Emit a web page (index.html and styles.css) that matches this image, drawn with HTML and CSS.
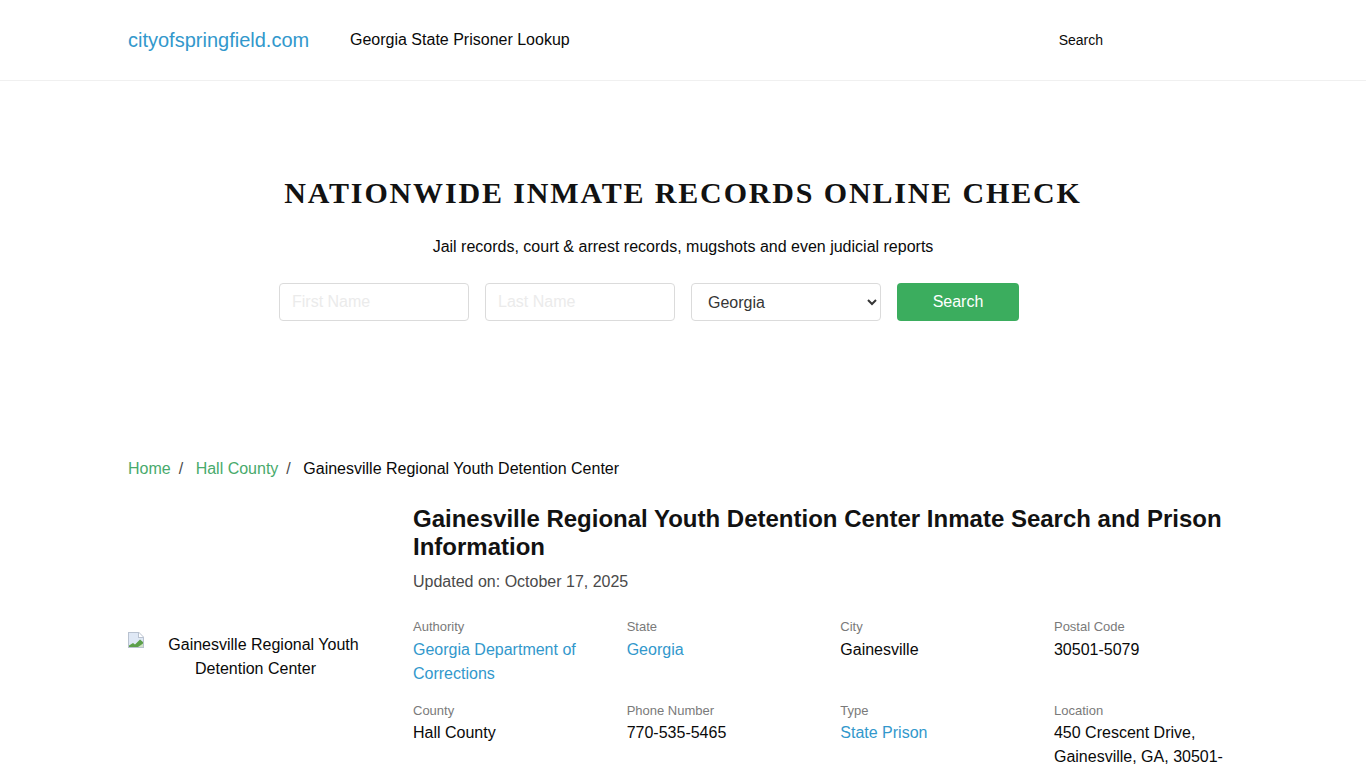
FILE: index.html
```html
<!DOCTYPE html>
<html lang="en">
<head>
<meta charset="utf-8">
<title>Gainesville Regional Youth Detention Center</title>
<link rel="stylesheet" href="styles.css">
</head>
<body>
<header class="topbar">
  <div class="container topbar-inner">
    <a class="brand" href="#">cityofspringfield.com</a>
    <a class="nav-title" href="#">Georgia State Prisoner Lookup</a>
    <a class="nav-search" href="#">Search</a>
  </div>
</header>
<section class="hero">
  <h2 class="hero-title">NATIONWIDE INMATE RECORDS ONLINE CHECK</h2>
  <p class="hero-sub">Jail records, court &amp; arrest records, mugshots and even judicial reports</p>
  <form class="search-form">
    <input class="field" type="text" placeholder="First Name">
    <input class="field" type="text" placeholder="Last Name">
    <select class="field select"><option>Georgia</option></select>
    <button class="btn" type="button">Search</button>
  </form>
</section>
<main class="container">
  <nav class="crumbs">
    <a href="#">Home</a><span class="sep">/</span><a href="#">Hall County</a><span class="sep">/</span><span>Gainesville Regional Youth Detention Center</span>
  </nav>
  <div class="detail">
    <div class="photo">
      <svg class="broken" width="16" height="16" viewBox="0 0 16 16"><path d="M0 0H11L16 5V16H0Z" fill="#b9c2d0"/><path d="M1 1H10V6H15V15H1Z" fill="#dfe8f5"/><path d="M11 1L15 5H11Z" fill="#fff"/><path d="M1 15V13.500L5 11L7 12.500L12 7.500L15 10V15Z" fill="#5da04a"/><path d="M10 15L15 11.500V15Z" fill="#cfe3c4"/></svg>
      <span class="alt">Gainesville Regional Youth Detention Center</span>
    </div>
    <div class="info">
      <h1 class="title">Gainesville Regional Youth Detention Center Inmate Search and Prison Information</h1>
      <p class="updated">Updated on: October 17, 2025</p>
      <div class="grid">
        <div class="cell"><div class="label">Authority</div><a href="#">Georgia Department of Corrections</a></div>
        <div class="cell"><div class="label">State</div><a href="#">Georgia</a></div>
        <div class="cell"><div class="label">City</div><div>Gainesville</div></div>
        <div class="cell"><div class="label">Postal Code</div><div>30501-5079</div></div>
        <div class="cell"><div class="label">County</div><div>Hall County</div></div>
        <div class="cell"><div class="label">Phone Number</div><div>770-535-5465</div></div>
        <div class="cell"><div class="label">Type</div><a href="#">State Prison</a></div>
        <div class="cell"><div class="label">Location</div><div>450 Crescent Drive, Gainesville, GA, 30501-5079</div></div>
      </div>
    </div>
  </div>
</main>
</body>
</html>
```
FILE: styles.css
```css
* { box-sizing: border-box; }
html, body { margin: 0; padding: 0; }
body { font-family: "Liberation Sans", Arial, sans-serif; font-size: 16px; line-height: 24px; color: #0a0a0a; background: #fff; height: 768px; overflow: hidden; }
a { text-decoration: none; }
.container { width: 1110px; margin: 0 auto; }
.topbar { height: 81px; border-bottom: 1px solid #f0f0f0; }
.topbar-inner { display: flex; align-items: center; height: 80px; }
.brand { font-size: 20px; color: #3298cc; width: 222px; }
.nav-title { color: #0a0a0a; }
.nav-search { color: #0a0a0a; font-size: 14px; margin-left: 489px; }
.hero { height: 361px; padding-top: 94px; text-align: center; }
.hero-title { margin: 0; font-family: "Liberation Serif", "Times New Roman", serif; font-size: 30px; line-height: 36px; font-weight: 700; letter-spacing: 1.85px; color: #121212; }
.hero-sub { margin: 24px 0 0; }
.search-form { display: flex; justify-content: center; gap: 16px; margin-top: 24px; padding-right: 68px; }
.field { width: 190px; height: 38px; border: 1px solid #dbdbdb; border-radius: 4px; padding: 0 12px; font: 16px "Liberation Sans", Arial, sans-serif; background: #fff; color: #363636; }
.field::placeholder { color: #ebebeb; }
.btn { width: 122px; height: 38px; border: 0; border-radius: 4px; background: #3bad5e; color: #fff; font: 16px "Liberation Sans", Arial, sans-serif; }
.crumbs { margin-top: 15px; display: flex; color: #0a0a0a; }
.crumbs a { color: #48aa6c; }
.sep { margin: 0 12.5px 0 8px; color: #4a4a4a; }
.detail { display: flex; margin-top: 24px; }
.photo { width: 285px; flex: none; align-self: flex-start; margin-top: 128px; padding-right: 30px; text-align: center; }
.broken { float: left; margin-top: -1px; }
.info { flex: 1; min-width: 0; }
.title { margin: 0; font-size: 24px; line-height: 28px; font-weight: 700; color: #121212; }
.updated { margin: 9px 0 0; color: #4a4a4a; }
.grid { display: grid; grid-template-columns: repeat(4, 213.67px); row-gap: 18px; margin-top: 26px; }
.cell { padding-right: 30px; }
.cell a { color: #3298cc; }
.label { font-size: 13px; line-height: 14px; color: #7a7a7a; margin-bottom: 3.5px; }
```
